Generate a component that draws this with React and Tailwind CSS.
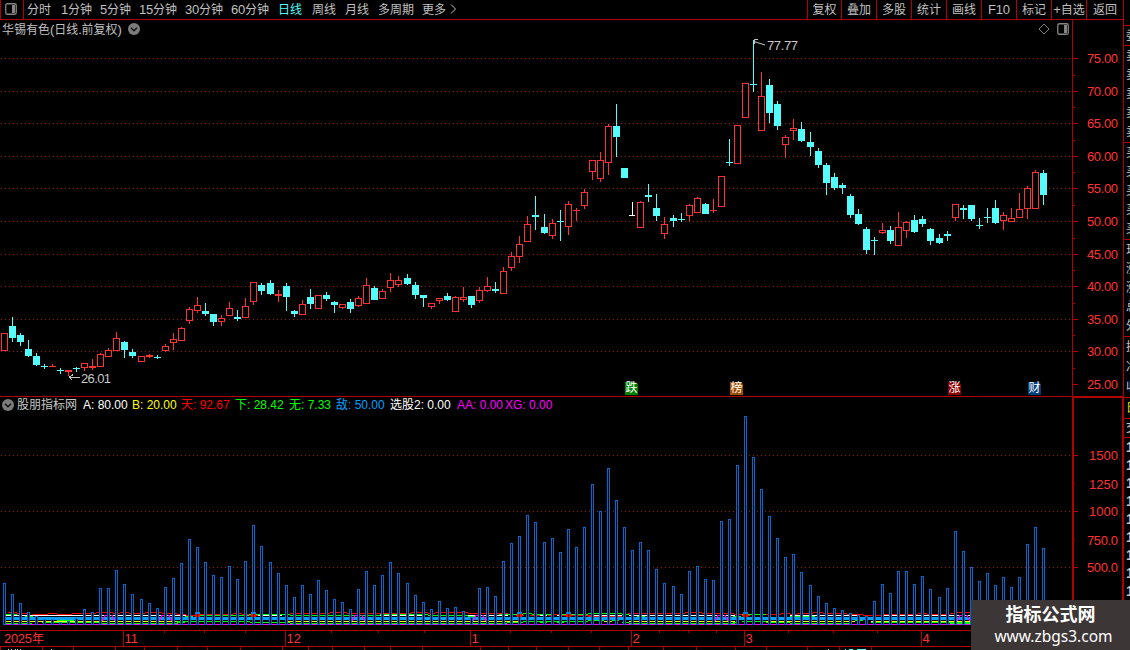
import React from 'react';

const RED = '#ff3232';
const CYAN = '#54fcfc';
const LINE = '#b00000';

// [high, bodyTop, bodyBottom, low, kind]
const CANDLES = [
  [333,333,351,351,'r'],[317,326,338,342,'c'],[333,335,342,346,'c'],[340,349,356,357,'c'],[353,356,365,366,'c'],
  [364,366,367,369,'c'],[364,366,367,367,'r'],[368,370,371,374,'c'],[370,370,372,376,'r'],[367,368,369,372,'c'],
  [363,363,368,371,'r'],[359,366,368,370,'r'],[353,354,367,367,'r'],[348,350,357,357,'r'],[332,338,351,351,'r'],
  [341,342,350,358,'c'],[349,352,356,358,'c'],[356,356,362,362,'r'],[354,355,357,358,'r'],[355,357,358,359,'c'],
  [344,346,351,352,'r'],[333,339,343,350,'r'],[327,328,341,341,'r'],[307,309,321,324,'r'],[297,305,311,313,'r'],
  [303,311,314,316,'c'],[314,314,322,326,'c'],[315,318,322,326,'r'],[302,308,316,316,'r'],[310,317,319,321,'c'],
  [298,306,318,318,'r'],[282,282,302,305,'r'],[283,285,291,295,'c'],[280,283,294,295,'c'],[290,294,296,302,'r'],
  [283,286,297,311,'c'],[310,311,314,317,'c'],[300,304,315,315,'r'],[289,297,304,309,'c'],[295,295,309,309,'r'],
  [292,295,299,301,'c'],[301,302,305,313,'c'],[304,304,308,309,'r'],[299,302,309,313,'c'],[296,298,306,307,'r'],
  [278,285,304,304,'r'],[286,288,300,300,'c'],[289,291,299,299,'r'],[273,280,288,292,'r'],[276,280,285,287,'r'],
  [274,278,284,285,'c'],[282,285,295,299,'c'],[295,295,298,307,'c'],[303,303,307,309,'r'],[298,298,301,304,'r'],
  [293,296,300,301,'c'],[296,297,312,312,'r'],[287,297,300,302,'r'],[296,296,305,308,'c'],[287,290,301,303,'r'],
  [277,286,291,292,'r'],[282,289,291,293,'c'],[267,271,294,294,'r'],[252,256,268,271,'r'],[236,244,257,263,'r'],
  [216,224,242,242,'r'],[196,215,217,230,'c'],[214,227,233,234,'c'],[219,223,236,239,'r'],[210,221,222,241,'c'],
  [201,204,227,235,'r'],[208,210,211,221,'r'],[189,192,206,209,'r'],[160,160,172,180,'r'],[152,160,179,182,'r'],
  [124,126,163,175,'r'],[104,126,137,157,'c'],[168,168,178,178,'c'],[202,215,216,216,'w'],[201,202,228,228,'r'],
  [184,195,197,202,'c'],[194,208,216,221,'c'],[217,224,234,239,'r'],[215,218,221,227,'c'],[213,219,220,222,'c'],
  [204,205,216,222,'r'],[197,198,213,213,'r'],[203,204,214,214,'c'],[199,210,211,213,'r'],[176,176,207,207,'r'],
  [139,162,163,166,'c'],[125,125,164,164,'r'],[83,83,118,118,'r'],[40,84,85,92,'c'],[72,96,131,131,'r'],
  [79,85,113,123,'c'],[101,104,126,130,'c'],[135,137,145,158,'r'],[119,128,131,140,'r'],[122,129,141,142,'c'],
  [132,142,147,156,'c'],[148,151,165,168,'c'],[163,165,183,195,'c'],[173,177,188,190,'c'],[183,185,188,194,'c'],
  [194,196,215,218,'c'],[209,214,224,225,'c'],[227,229,250,254,'c'],[237,240,241,255,'c'],[223,230,233,234,'r'],
  [226,230,241,244,'c'],[212,227,246,246,'r'],[221,222,231,238,'r'],[215,220,232,233,'c'],[216,219,224,227,'c'],
  [228,229,241,245,'c'],[234,238,243,244,'c'],[231,234,236,241,'c'],[204,204,218,221,'r'],[205,208,210,219,'c'],
  [205,205,219,221,'c'],[218,225,226,229,'c'],[208,217,218,223,'c'],[200,208,223,224,'c'],[212,215,221,230,'r'],
  [208,218,222,222,'r'],[193,209,218,218,'r'],[186,188,209,219,'r'],[170,172,209,209,'r'],[170,173,195,205,'c'],
];

const BAR_TOPS = [
  583,594,603,612,616,619,619,622,621,618,609,612,588,588,570,584,594,599,603,608,587,578,563,539,547,562,575,577,566,579,
  561,525,546,562,573,585,597,585,594,580,590,599,602,609,589,571,585,575,562,573,583,595,602,609,601,608,607,611,617,588,
  587,596,561,543,536,515,522,542,538,552,529,547,527,484,511,468,500,527,550,542,550,569,583,586,594,571,566,579,580,521,
  519,465,416,457,489,516,538,557,554,572,585,596,603,608,610,613,615,616,601,584,593,571,571,584,576,589,597,588,531,551,
  567,581,573,585,577,587,577,544,527,548,
];

// One extra pixel of spacing is added at each of these columns.
const SHIFTS = [17, 33, 50, 67, 83, 100, 116];
const colX = (i) => 4 + i * 8 + SHIFTS.filter((s) => i >= s).length;

const R = ({ x, y, w, h, f }) => <rect x={x} y={y} width={w} height={h} fill={f} />;

function DotRow({ y, to = 1070 }) {
  return <line x1="1" x2={to} y1={y + 0.5} y2={y + 0.5} stroke="#a01414" strokeWidth="1" strokeDasharray="1 3" />;
}

function Candle({ i, d }) {
  const [hi, top, bot, lo, k] = d;
  const x = colX(i);
  const c = k === 'r' ? RED : k === 'c' ? CYAN : '#ffffff';
  const hollow = k === 'r' && bot - top > 2;
  return (
    <g>
      {top > hi && <R x={x} y={hi} w={1} h={top - hi} f={c} />}
      {lo > bot && <R x={x} y={bot} w={1} h={lo - bot} f={c} />}
      {hollow ? (
        <rect x={x - 2.5} y={top + 0.5} width="6" height={bot - top - 1} fill="#000" stroke={c} strokeWidth="1" />
      ) : (
        <R x={x - 3} y={top} w={k === 'w' ? 6 : 7} h={bot - top} f={c} />
      )}
    </g>
  );
}

const PRICE_TICKS = [
  [58,'75.00'],[91,'70.00'],[123,'65.00'],[156,'60.00'],[188,'55.00'],[221,'50.00'],
  [254,'45.00'],[286,'40.00'],[319,'35.00'],[351,'30.00'],[384,'25.00'],
];
const MINOR_TICKS = [75,107,140,172,205,238,270,303,335,368];

function PriceChart() {
  return (
    <svg className="block h-[377px] w-[1123px]" viewBox="0 20 1123 377" shapeRendering="crispEdges">
      {PRICE_TICKS.slice(0, 10).map(([y]) => <DotRow key={y} y={y} />)}
      {CANDLES.map((d, i) => <Candle key={i} i={i} d={d} />)}
      <R x={1072} y={20} w={1} h={377} f={LINE} />
      {PRICE_TICKS.map(([y]) => <R key={y} x={1073} y={y} w={5} h={1} f={LINE} />)}
      {MINOR_TICKS.map((y) => <R key={y} x={1073} y={y} w={2} h={1} f={LINE} />)}
      <R x={0} y={396} w={1123} h={1} f={LINE} />
      <g fill="none" stroke="#c8c8c8" strokeWidth="1">
        <path d="M69 377.5H80M73 374.5L69.5 377.5L72.5 380.5M69 376.5h2" />
        <path d="M754 41.5L765 45M758 39.5H754.5V44" shapeRendering="auto" />
      </g>
      <g fontFamily="Liberation Sans, Arial, sans-serif" fontSize="13">
        {PRICE_TICKS.map(([y, t]) => (
          <text key={y} x="1087" y={y + 5} fill={RED} textLength="31">{t}</text>
        ))}
        <text x="81" y="383" fill="#c8c8c8" textLength="30">26.01</text>
        <text x="767" y="50" fill="#c8c8c8" textLength="31">77.77</text>
      </g>
    </svg>
  );
}

// [x0, x1, y] runs of the stepped indicator lines
const RED_RUNS = [
  [8,17,612],[17,27,613],[33,48,614],[48,57,613],[57,72,614],[72,96,613],[96,113,612],[113,120,613],[120,129,612],[129,145,613],
  [145,162,612],[162,177,613],[177,186,614],[186,200,615],[200,233,614],[233,242,613],[242,249,614],[249,258,615],[290,330,613],
  [330,347,612],[347,411,613],[411,428,612],[428,435,613],[435,468,612],[468,508,613],[516,524,615],[530,540,615],[548,554,615],
  [554,562,614],[562,575,615],[575,593,615],[588,622,616],[628,685,613],[685,702,612],[702,734,613],[734,742,614],[742,750,615],
  [766,781,614],[781,790,613],[790,797,614],[797,813,613],[813,823,612],[823,847,613],[847,863,614],[863,883,615],[883,918,614],
  [918,927,613],[927,950,614],[950,957,613],[957,975,612],
];
const GREEN_RUNS = [
  [6,17,614],[25,33,616],[57,74,620],[57,74,622],[42,100,622],[6,18,623],[20,32,623],[100,178,623],[177,185,622],[177,250,621],
  [185,193,616],[200,249,615],[249,290,614],[290,380,615],[250,290,622],[290,380,623],[380,428,614],[428,468,615],[468,476,616],
  [499,523,614],[523,532,613],[532,558,614],[562,588,614],[588,622,613],[622,629,614],[507,523,622],[523,588,621],[540,547,622],
  [557,564,622],[588,604,620],[612,619,620],[622,629,622],[637,645,616],[629,735,623],[380,507,623],[733,741,616],[733,737,622],
  [742,766,614],[742,766,621],[766,790,622],[790,815,616],[790,850,623],[855,863,620],[871,950,622],[950,971,622],[950,971,623],
];
const WHITE_RUNS = [[6,186],[249,282],[380,422],[468,499],[499,508],[540,547],[557,562],[588,622],[629,735],[790,860],[876,971]];
const YELLOW_RUNS = [[6,178],[286,520],[540,547],[604,612],[629,735],[766,855],[871,971]];

const DAY_LINES = [[123,'11'],[285,'12'],[470,'1'],[631,'2'],[744,'3'],[921,'4']];
const WEEK_TICKS = [164,204,245,331,378,424,510,551,591,659,688,716,788,833,877];
const FOOT_CELLS = [0,42,73,115,144,177,207,240,282,308,332,364,390,422,480,508,536,568,599,628,663,696,735,766,807,839,871];

function VolumeChart() {
  return (
    <svg className="block h-[253px] w-[1123px]" viewBox="0 397 1123 253" shapeRendering="crispEdges">
      {[455, 511, 567].map((y) => <DotRow key={y} y={y} />)}
      <R x={6} y={617} w={966} h={3} f="#00a0ff" />
      <R x={6} y={624} w={966} h={1} f="#ff00ff" />
      {WHITE_RUNS.map(([a, b]) => <R key={a} x={a} y={615} w={b - a} h={1} f="#ffffff" />)}
      {YELLOW_RUNS.map(([a, b]) => <R key={a} x={a} y={621} w={b - a} h={1} f="#ffff00" />)}
      {GREEN_RUNS.map(([a, b, y], i) => <R key={i} x={a} y={y} w={b - a} h={1} f="#00ff00" />)}
      {RED_RUNS.map(([a, b, y], i) => <R key={i} x={a} y={y} w={b - a} h={1} f="#ff0000" />)}
      {BAR_TOPS.map((t, i) => (
        <rect key={i} x={colX(i) - 0.5} y={t + 0.5} width="2" height={624 - t} fill="#000" stroke="#0069d2" strokeWidth="1" />
      ))}
      {[197, 253, 519, 568, 745].map((x) => (
        <g key={x}>
          <R x={x - 2} y={612} w={5} h={2} f="#0080e0" />
          <R x={x - 2} y={614} w={2} h={3} f="#ff0000" />
          <R x={x + 1} y={614} w={2} h={3} f="#ff0000" />
        </g>
      ))}
      {[108, 165, 358, 479, 721, 963].map((x) => (
        <path key={x} d={`M${x - 6} 621V619.5h1V617.5h1.5V615.5h2M${x + 3} 615.5h1V617.5h1V619.5h1.5V621`} fill="none" stroke="#ff00ff" strokeWidth="1" />
      ))}
      <R x={1072} y={397} w={2} h={233} f={LINE} />
      <R x={1072} y={397} w={51} h={1} f={LINE} />
      <R x={1122} y={397} w={1} h={253} f={LINE} />
      {[455, 511, 567].map((y) => <R key={y} x={1074} y={y} w={4} h={1} f={LINE} />)}
      {[483, 539].map((y) => <R key={y} x={1074} y={y} w={1} h={1} f={LINE} />)}
      <R x={0} y={630} w={1123} h={1} f={LINE} />
      <R x={0} y={646} w={1123} h={1} f={LINE} />
      {DAY_LINES.map(([x]) => <R key={x} x={x} y={630} w={1} h={16} f={LINE} />)}
      {WEEK_TICKS.map((x) => <R key={x} x={x} y={631} w={1} h={2} f={LINE} />)}
      {FOOT_CELLS.map((x) => <R key={x} x={x} y={647} w={1} h={3} f={LINE} />)}
      {[8, 11, 15, 17, 20, 51, 828].map((x) => <R key={x} x={x} y={649} w={1} h={1} f="#c8c8c8" />)}
      {[[845, 1], [849, 4], [857, 9]].map(([x, w]) => <R key={x} x={x} y={649} w={w} h={1} f={CYAN} />)}
      <g fontFamily="Liberation Sans, Noto Sans CJK SC, sans-serif" fontSize="13" fill={RED}>
        <text x="1089" y="460" textLength="29">1500</text>
        <text x="1089" y="489" textLength="29">1250</text>
        <text x="1089" y="516" textLength="29">1000</text>
        <text x="1087" y="545" textLength="31">750.0</text>
        <text x="1087" y="572" textLength="31">500.0</text>
        <text x="4" y="643" textLength="28">2025</text>
        <text x="32" y="643" fontSize="12">年</text>
        {DAY_LINES.map(([x, t]) => <text key={x} x={x + 1.5} y="643">{t}</text>)}
      </g>
    </svg>
  );
}

function PanelIcon({ className }) {
  return (
    <svg className={className} viewBox="0 0 12 12">
      <rect x="0.75" y="0.75" width="10.5" height="10.5" rx="1.5" fill="none" stroke="#858585" strokeWidth="1.3" />
      <rect x="7" y="2" width="3" height="8" fill="#858585" />
    </svg>
  );
}

function DropIcon() {
  return (
    <svg className="h-3 w-3 shrink-0" viewBox="0 0 12 12">
      <circle cx="6" cy="6" r="6" fill="#7c7c7c" />
      <path d="M3 4.7L6 7.7L9 4.7" fill="none" stroke="#101010" strokeWidth="1.4" />
    </svg>
  );
}

// Latin runs are set slightly larger than the ideographs beside them.
function Mixed({ t }) {
  return t.split(/([\x20-\x7e]+)/).filter(Boolean).map((s, i) => (
    <span key={i} className={/^[\x20-\x7e]/.test(s) ? 'text-[13px] tracking-[-0.2px]' : 'text-[12px]'}>{s}</span>
  ));
}

function Periods() {
  const item = 'shrink-0 whitespace-pre';
  return (
    <nav className="flex flex-1 items-center leading-[18px]">
      <div className="flex h-[19px] w-6 shrink-0 items-center border-x border-[#b00000] pl-1">
        <PanelIcon className="mb-0.5 h-3 w-3" />
      </div>
      <span className={`${item} ml-[3px] w-[34px]`}><Mixed t="分时" /></span>
      <span className={`${item} w-[39px]`}><Mixed t="1分钟" /></span>
      <span className={`${item} w-[39px]`}><Mixed t="5分钟" /></span>
      <span className={`${item} w-[46px]`}><Mixed t="15分钟" /></span>
      <span className={`${item} w-[46px]`}><Mixed t="30分钟" /></span>
      <span className={`${item} w-[47px]`}><Mixed t="60分钟" /></span>
      <span className={`${item} w-[34px] text-[#54fcfc]`}><Mixed t="日线" /></span>
      <span className={`${item} w-[33px]`}><Mixed t="周线" /></span>
      <span className={`${item} w-[33px]`}><Mixed t="月线" /></span>
      <span className={`${item} w-[44px]`}><Mixed t="多周期" /></span>
      <span className={`${item} w-[28px]`}><Mixed t="更多" /></span>
      <svg className="mb-0.5 h-[10px] w-[7px]" viewBox="0 0 7 10"><path d="M1 0.5L5.5 5L1 9.5" fill="none" stroke="#c0c0c0" /></svg>
    </nav>
  );
}

function Tools() {
  const cell = 'flex h-[19px] items-center justify-center border-l border-[#b00000] whitespace-nowrap leading-[18px]';
  return (
    <div className="flex shrink-0">
      <div className={`${cell} w-[34px]`}><Mixed t="复权" /></div>
      <div className={`${cell} w-[35px]`}><Mixed t="叠加" /></div>
      <div className={`${cell} w-[35px]`}><Mixed t="多股" /></div>
      <div className={`${cell} w-[35px]`}><Mixed t="统计" /></div>
      <div className={`${cell} w-[35px]`}><Mixed t="画线" /></div>
      <div className={`${cell} w-[35px]`}><Mixed t="F10" /></div>
      <div className={`${cell} w-[35px]`}><Mixed t="标记" /></div>
      <div className={`${cell} w-[35px]`}><Mixed t="+自选" /></div>
      <div className={`${cell} w-[37px]`}><Mixed t="返回" /></div>
    </div>
  );
}

function Legend() {
  const item = 'shrink-0 whitespace-pre';
  const n = 'text-[12px]';
  return (
    <div className="absolute left-0 top-0 flex h-4 items-center pl-[2px] text-[12px] leading-4">
      <DropIcon />
      <span className={`${item} ml-[3px] w-[66px] text-[#c8c8c8]`}>股朋指标网</span>
      <span className={`${item} w-[49px] text-white`}><span className={n}>A: 80.00</span></span>
      <span className={`${item} w-[49px] text-[#ffff00]`}><span className={n}>B: 20.00</span></span>
      <span className={`${item} w-[54px] text-[#ff0000]`}>天<span className={n}>: 92.67</span></span>
      <span className={`${item} w-[54px] text-[#00ff00]`}>下<span className={n}>: 28.42</span></span>
      <span className={`${item} w-[47px] text-[#00ff00]`}>无<span className={n}>: 7.33</span></span>
      <span className={`${item} w-[54px] text-[#00a0ff]`}>敌<span className={n}>: 50.00</span></span>
      <span className={`${item} w-[67px] text-white`}>选股<span className={n}>2: 0.00</span></span>
      <span className={`${item} w-[48px] text-[#ff00ff]`}><span className={n}>AA: 0.00</span></span>
      <span className={`${item} text-[#ff00ff]`}><span className={n}>XG: 0.00</span></span>
    </div>
  );
}

function Sidebar() {
  const col = 'flex shrink-0 flex-col justify-around border-b border-[#b00000] pl-[2px]';
  const cells = (s) => s.split('').map((c, i) => <span key={i} className="block h-3 w-3 leading-3">{c}</span>);
  return (
    <aside className="flex h-[650px] w-[7px] shrink-0 flex-col overflow-hidden border-l border-[#b00000] text-[12px] text-[#c8c8c8]">
      <div className="h-[26px] shrink-0 border-b border-[#b00000]" />
      <div className={`${col} h-[20px]`}>{cells('委')}</div>
      <div className={`${col} h-[97px]`}>{cells('卖卖卖卖卖')}</div>
      <div className={`${col} h-[97px]`}>{cells('买买买买买')}</div>
      <div className={`${col} h-[97px]`}>{cells('现涨涨总外')}</div>
      <div className={`${col} h-[61px]`}>{cells('换净收')}</div>
      <div className={`${col} h-[21px] text-[#e0e000]`}>{cells('日')}</div>
      <div className={`${col} h-[19px]`}>{cells('交')}</div>
      <div className="flex flex-col pl-[2px] font-bold">
        {Array.from({ length: 9 }, (_, i) => <span key={i} className="block h-[18px] text-[14px] leading-[18px]">1</span>)}
      </div>
    </aside>
  );
}

export default function App() {
  const badge = 'absolute top-[362px] h-[13px] w-[13px] rounded-tr-sm text-center text-[12px] leading-[13px] text-white';
  return (
    <div className="relative flex h-[650px] w-[1130px] overflow-hidden bg-black font-['Liberation_Sans','Noto_Sans_CJK_SC',sans-serif] text-[#c0c0c0]">
      <main className="flex w-[1123px] shrink-0 flex-col">
        <header className="flex h-5 shrink-0 border-b border-[#b00000]">
          <Periods />
          <Tools />
        </header>
        <section className="relative h-[377px] shrink-0">
          <PriceChart />
          <div className="absolute left-0 top-0 flex h-[18px] w-[1072px] items-center pl-[2px] pr-[3px] leading-[18px]">
            <span className="w-[126px] whitespace-nowrap"><Mixed t="华锡有色(日线.前复权)" /></span>
            <DropIcon />
            <svg className="ml-auto h-3 w-3" viewBox="0 0 12 12"><path d="M6 1L11 6L6 11L1 6Z" fill="none" stroke="#808080" /></svg>
            <PanelIcon className="ml-[7px] h-3 w-3" />
          </div>
          <span className={`${badge} left-[625px] bg-[#008000]`}>跌</span>
          <span className={`${badge} left-[730px] bg-[#a05000]`}>榜</span>
          <span className={`${badge} left-[948px] bg-[#8a0000]`}>涨</span>
          <span className={`${badge} left-[1028px] bg-[#003c78]`}>财</span>
        </section>
        <section className="relative h-[253px] shrink-0">
          <VolumeChart />
          <Legend />
        </section>
      </main>
      <Sidebar />
      <div className="absolute bottom-0 right-0 flex h-[50px] w-[159px] flex-col items-center bg-[#3d3636] pt-[4px] text-white">
        <div className="text-[18px] font-bold leading-[22px]">指标公式网</div>
        <div className="ml-[6px] whitespace-nowrap font-['Noto_Sans','Open_Sans',sans-serif] text-[15.5px] leading-[20px]">www.zbgs3.com</div>
      </div>
    </div>
  );
}
